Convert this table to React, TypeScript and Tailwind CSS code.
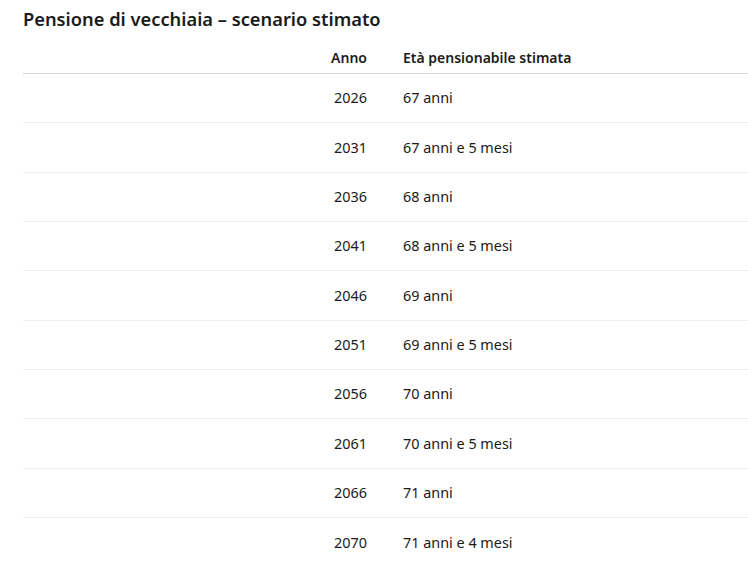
import React from "react";

type Row = { year: number; age: string };

const rows: Row[] = [
  { year: 2026, age: "67 anni" },
  { year: 2031, age: "67 anni e 5 mesi" },
  { year: 2036, age: "68 anni" },
  { year: 2041, age: "68 anni e 5 mesi" },
  { year: 2046, age: "69 anni" },
  { year: 2051, age: "69 anni e 5 mesi" },
  { year: 2056, age: "70 anni" },
  { year: 2061, age: "70 anni e 5 mesi" },
  { year: 2066, age: "71 anni" },
  { year: 2070, age: "71 anni e 4 mesi" }
];

export default function App() {
  return (
    <div
      className="min-h-[575px] overflow-hidden bg-white pl-[23px] text-[#1b1b1b]"
      style={{ fontFamily: '"Noto Sans", "Open Sans", sans-serif' }}
    >
      <h1 className="pt-[7px] text-[18.3px] leading-6 font-semibold">
        Pensione di vecchiaia – scenario stimato
      </h1>
      <div className="mt-[10px] w-[725px] text-[14.4px]">
        <div className="flex h-[33px] items-center border-b border-[#d6d6d6] text-[14px] font-semibold">
          <div className="w-[288px]" />
          <div className="w-[68px] pr-3 text-right">Anno</div>
          <div className="pl-6">Età pensionabile stimata</div>
        </div>
        {rows.map((r) => (
          <div
            key={r.year}
            className="flex h-[49.35px] items-center border-b border-[#efefef] last:border-b-0"
          >
            <div className="w-[288px]" />
            <div className="w-[68px] pr-3 text-right">{r.year}</div>
            <div className="pl-6">{r.age}</div>
          </div>
        ))}
      </div>
    </div>
  );
}
